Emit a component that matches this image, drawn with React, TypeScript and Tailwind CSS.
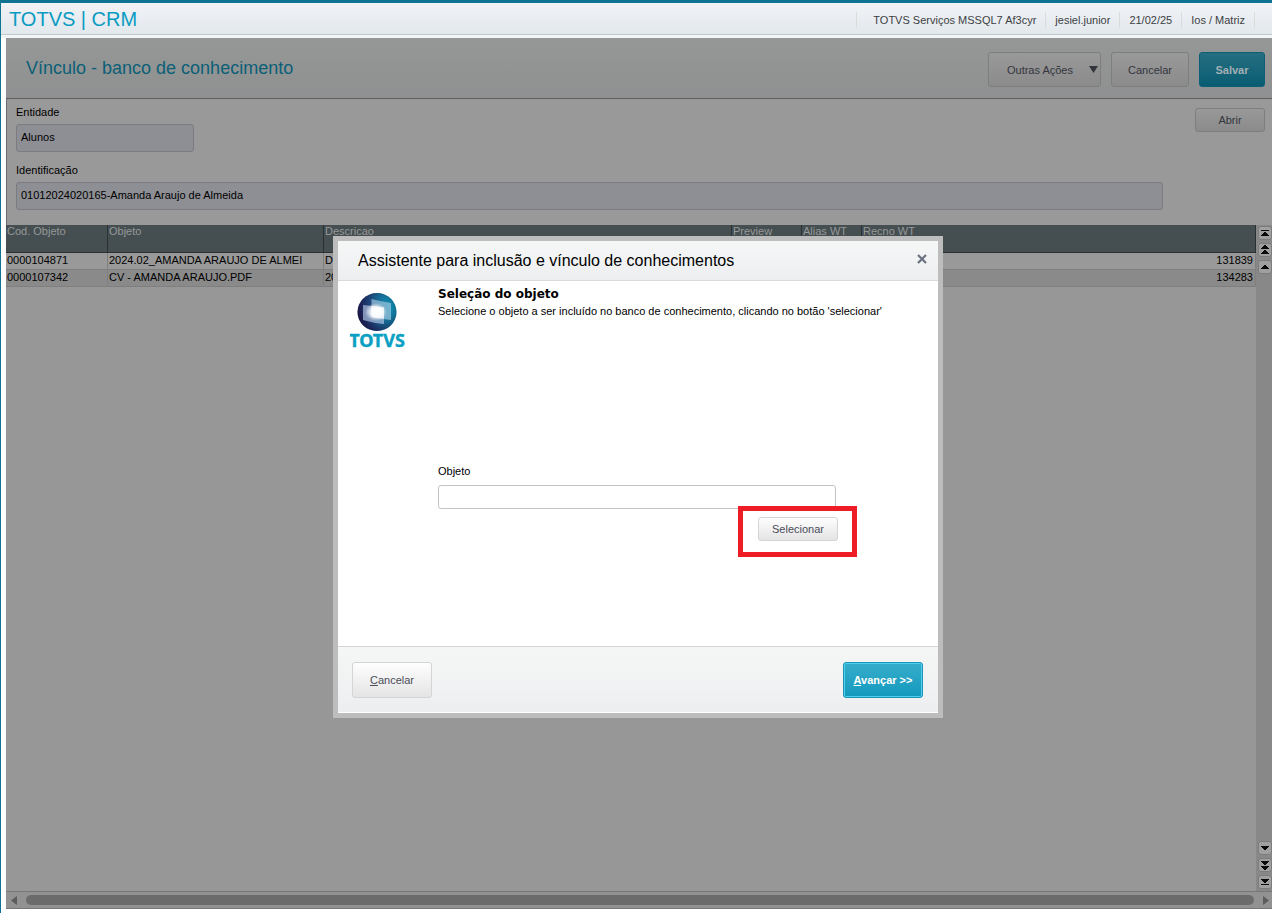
import React from "react";

const rows = [
  { code: "0000104871", object: "2024.02_AMANDA ARAUJO DE ALMEI", description: "DO", recno: "131839" },
  { code: "0000107342", object: "CV - AMANDA ARAUJO.PDF", description: "20", recno: "134283" },
];

const session = ["jesiel.junior", "21/02/25", "Ios / Matriz"];

function TotvsLogo() {
  return (
    <svg width="56" height="58" viewBox="0 0 56 58" role="img" aria-label="TOTVS">
      <defs>
        <linearGradient id="ball" x1="0" y1="0.6" x2="1" y2="0.35">
          <stop offset="0" stopColor="#1e1648" />
          <stop offset="0.35" stopColor="#1d3f73" />
          <stop offset="0.7" stopColor="#1678a0" />
          <stop offset="1" stopColor="#0aa0c2" />
        </linearGradient>
        <radialGradient id="shade" cx="0.5" cy="0.45" r="0.56">
          <stop offset="0.6" stopColor="#15153f" stopOpacity="0" />
          <stop offset="1" stopColor="#15153f" stopOpacity="0.5" />
        </radialGradient>
        <radialGradient id="glow" cx="0.5" cy="0.5" r="0.5">
          <stop offset="0" stopColor="#ffffff" />
          <stop offset="0.5" stopColor="#ffffff" stopOpacity="0.8" />
          <stop offset="1" stopColor="#ffffff" stopOpacity="0" />
        </radialGradient>
      </defs>
      <ellipse cx="27" cy="20" rx="19.500" ry="19" fill="url(#ball)" />
      <ellipse cx="27" cy="20" rx="19.500" ry="19" fill="url(#shade)" />
      <path d="M21.500 7 Q31 9.500 41 11 V28 Q31 27 21.500 25 Z" fill="#a9cde4" fillOpacity="0.65" />
      <path d="M13 13 Q23 13.500 34 15.500 V32 Q23 31 13 28 Z" fill="#b9cde8" fillOpacity="0.65" />
      <path d="M21.500 14 Q28 14 34 15.500 V26.500 Q28 26.500 21.500 25 Z" fill="#ffffff" fillOpacity="0.75" />
      <ellipse cx="26" cy="20" rx="11" ry="9" fill="url(#glow)" />
      <text
        x="27"
        y="55"
        textAnchor="middle"
        fontFamily="'Noto Sans', 'Open Sans', sans-serif"
        fontWeight="700"
        fontSize="18"
        fill="#0a9fc3"
        stroke="#0a9fc3"
        strokeWidth="0.4"
      >
        TOTVS
      </text>
    </svg>
  );
}

function ScrollButton({ label, children }: { label: string; children: React.ReactNode }) {
  return (
    <button
      type="button"
      aria-label={label}
      className="flex h-[14px] w-[14px] items-center justify-center rounded-[3px] border border-[#7c7c7c] bg-[#a0a0a0]"
    >
      <svg width="10" height="12" viewBox="0 0 10 12" fill="#0a0a0a" shapeRendering="crispEdges">
        {children}
      </svg>
    </button>
  );
}

const dimButton =
  "flex items-center justify-center rounded-[3px] border border-[#7e7e7e] bg-linear-to-b from-[#999999] to-[#8b8b8b] text-[#33353d]";
const lightButton =
  "flex items-center justify-center rounded-[3px] border border-[#d4d4d4] bg-linear-to-b from-[#fefefe] to-[#e4e4e4] text-[#4a4d5a]";
const field = "h-7 rounded-[3px] border border-[#7b7c80] bg-[#8e8f94] px-1 pb-[3px] text-black outline-none";
const headCell = "border-r border-b border-[#2b3032] pl-px text-left align-top font-normal";
const bodyCell = "truncate border-r border-b border-[#7f7f7f] pl-px align-top";

function Dialog() {
  return (
    <div
      role="dialog"
      aria-labelledby="dialog-title"
      className="flex h-[482px] w-[610px] flex-col border-[5px] border-[#bdbdbd] bg-white"
    >
      <header className="flex h-10 shrink-0 items-center justify-between border-b border-[#d9dadb] bg-linear-to-b from-[#f5f7f7] to-[#eceef0] pr-[10px] pl-5">
        <h2 id="dialog-title" className="text-base text-black">
          Assistente para inclusão e vínculo de conhecimentos
        </h2>
        <button type="button" aria-label="Fechar" className="mb-1 flex h-3 w-3 items-center justify-center">
          <svg width="10" height="10" viewBox="0 0 10 10" stroke="#6b7080" strokeWidth="2.200">
            <path d="M1 1 L9 9 M9 1 L1 9" />
          </svg>
        </button>
      </header>

      <div className="flex flex-1">
        <div className="w-[100px] shrink-0 pt-[11px] pl-3">
          <TotvsLogo />
        </div>
        <div className="flex flex-1 flex-col pt-[5px] text-black">
          <h3 className="font-['DejaVu_Sans'] text-xs font-bold">Seleção do objeto</h3>
          <p className="mt-px">
            Selecione o objeto a ser incluído no banco de conhecimento, clicando no botão 'selecionar'
          </p>
          <label htmlFor="objeto" className="mt-[144px]">
            Objeto
          </label>
          <input
            id="objeto"
            type="text"
            className="mt-[6px] h-6 w-[398px] rounded-[3px] border border-[#c3c3c3] bg-white px-1 outline-none"
          />
          <div className="relative mt-2 ml-80 w-20">
            <button type="button" className={`${lightButton} h-6 w-20`}>
              Selecionar
            </button>
            <div className="pointer-events-none absolute -top-[11px] -right-[19px] -bottom-4 -left-5 border-[5px] border-[#ee1c25]" />
          </div>
        </div>
      </div>

      <footer className="mb-px flex h-[66px] shrink-0 items-start justify-between border-t border-[#d3d5d5] bg-linear-to-b from-[#f5f7f6] to-[#eceef0] pt-[15px] pr-[15px] pl-[14px]">
        <button type="button" className={`${lightButton} h-9 w-20`}>
          <span>
            <u className="underline-offset-1">C</u>ancelar
          </span>
        </button>
        <button
          type="button"
          className="flex h-9 w-20 items-center justify-center rounded-[3px] border border-[#1b93b4] bg-linear-to-b from-[#35adcb] to-[#0f99bd] font-bold text-white inset-ring inset-ring-[#4fd0ef]"
        >
          <span>
            <u className="underline-offset-1">A</u>vançar &gt;&gt;
          </span>
        </button>
      </footer>
    </div>
  );
}

export default function App() {
  return (
    <div className="flex min-h-screen flex-col border-t-[3px] border-l border-[#0e7291] bg-white font-['Liberation_Sans',Arial,sans-serif] text-[11px] leading-4">
      <header className="flex h-8 shrink-0 items-center justify-between border-b border-[#bfcccd] bg-linear-to-b from-[#f1f2f6] to-[#e2e8ec] pr-[17px] pl-2">
        <h1 className="text-xl text-[#0a9bc2]">TOTVS | CRM</h1>
        <div className="flex items-center pt-[2px] text-[#3d3f44]">
          <span className="border-l border-[#d9dcd9] pr-[9px] pl-4">TOTVS Serviços MSSQL7 Af3cyr</span>
          {session.map((item) => (
            <span key={item} className="border-l border-[#d9dcd9] px-[9px]">
              {item}
            </span>
          ))}
          <span className="h-4 border-l border-[#d9dcd9]" />
        </div>
      </header>
      <div className="h-[3px] shrink-0 bg-[#f4f5f6]" />

      <main className="relative mb-1 ml-[5px] flex flex-1 flex-col bg-[#999999]">
        <div className="flex h-[61px] shrink-0 items-center justify-between border-b border-[#5e5e5e] bg-linear-to-b from-[#959896] to-[#8f9091] pr-[7px] pl-5">
          <h2 className="text-lg text-[#0b5f77]">Vínculo - banco de conhecimento</h2>
          <div className="flex items-center gap-[10px] pt-[3px]">
            <button type="button" className={`${dimButton} h-[35px] w-[113px] justify-end gap-4 pr-[2px]`}>
              Outras Ações
              <svg width="9" height="7" viewBox="0 0 9 7" fill="#33353d">
                <path d="M0 0 H9 L4.500 7 Z" />
              </svg>
            </button>
            <button type="button" className={`${dimButton} h-[35px] w-[78px]`}>
              Cancelar
            </button>
            <button
              type="button"
              className="flex h-[35px] w-[66px] items-center justify-center rounded-[3px] border border-[#0b6077] bg-linear-to-b from-[#246e80] to-[#075d73] font-bold text-[#a3b0b5]"
            >
              Salvar
            </button>
          </div>
        </div>

        <div className="flex h-[126px] shrink-0 items-start justify-between border-l border-[#6c6c6c] pr-[7px] pl-[9px]">
          <div className="flex flex-1 flex-col pt-[5px] text-black">
            <label htmlFor="entidade">Entidade</label>
            <input id="entidade" readOnly defaultValue="Alunos" className={`${field} mt-1 w-[178px]`} />
            <label htmlFor="identificacao" className="mt-[10px]">
              Identificação
            </label>
            <input
              id="identificacao"
              readOnly
              defaultValue="01012024020165-Amanda Araujo de Almeida"
              className={`${field} mt-1 mr-8`}
            />
          </div>
          <button type="button" className={`${dimButton} mt-[9px] h-6 w-[70px]`}>
            Abrir
          </button>
        </div>

        <div className="flex flex-1">
          <div className="flex-1 bg-[#979797]">
            <table className="w-full table-fixed border-separate border-spacing-0 text-black">
              <colgroup>
                <col className="w-[102px]" />
                <col className="w-[216px]" />
                <col className="w-[408px]" />
                <col className="w-[70px]" />
                <col className="w-[60px]" />
                <col />
              </colgroup>
              <thead className="bg-[#454e50] text-[#96999a]">
                <tr className="h-7 leading-[12px]">
                  <th className={headCell}>Cod. Objeto</th>
                  <th className={headCell}>Objeto</th>
                  <th className={headCell}>Descricao</th>
                  <th className={headCell}>Preview</th>
                  <th className={headCell}>Alias WT</th>
                  <th className={headCell}>Recno WT</th>
                </tr>
              </thead>
              <tbody>
                {rows.map((row) => (
                  <tr key={row.code} className="h-[17px] bg-[#999999] leading-[14px] even:bg-[#8a8a8a]">
                    <td className={bodyCell}>{row.code}</td>
                    <td className={bodyCell}>{row.object}</td>
                    <td className={bodyCell}>{row.description}</td>
                    <td className={bodyCell} />
                    <td className={bodyCell} />
                    <td className={`${bodyCell} pr-[2px] text-right`}>{row.recno}</td>
                  </tr>
                ))}
              </tbody>
            </table>
          </div>
          <div className="flex w-4 shrink-0 flex-col justify-between bg-[#888888] pt-px pb-[2px] pl-[2px]">
            <div className="flex flex-col gap-[3px]">
              <ScrollButton label="Primeiro">
                <path d="M1 3h8v1H1zM4 5h2v1H4zM3 6h4v1H3zM2 7h6v1H2zM1 8h8v1H1z" />
              </ScrollButton>
              <ScrollButton label="Página anterior">
                <path d="M4 1h2v1H4zM3 2h4v1H3zM2 3h6v1H2zM1 4h8v1H1zM4 6h2v1H4zM3 7h4v1H3zM2 8h6v1H2zM1 9h8v1H1z" />
              </ScrollButton>
              <ScrollButton label="Linha anterior">
                <path d="M4 4h2v1H4zM3 5h4v1H3zM2 6h6v1H2zM1 7h8v1H1z" />
              </ScrollButton>
            </div>
            <div className="flex flex-col gap-[3px]">
              <ScrollButton label="Próxima linha">
                <path d="M1 4h8v1H1zM2 5h6v1H2zM3 6h4v1H3zM4 7h2v1H4z" />
              </ScrollButton>
              <ScrollButton label="Próxima página">
                <path d="M1 2h8v1H1zM2 3h6v1H2zM3 4h4v1H3zM4 5h2v1H4zM1 7h8v1H1zM2 8h6v1H2zM3 9h4v1H3zM4 10h2v1H4z" />
              </ScrollButton>
              <ScrollButton label="Último">
                <path d="M1 3h8v1H1zM2 4h6v1H2zM3 5h4v1H3zM4 6h2v1H4zM1 8h8v1H1z" />
              </ScrollButton>
            </div>
          </div>
        </div>

        <div className="flex h-[18px] shrink-0 items-center gap-[9px] border-y border-[#767676] bg-[#929292] pr-[3px] pl-[5px]">
          <button type="button" aria-label="Rolar para a esquerda">
            <svg width="6" height="9" viewBox="0 0 6 9" fill="#5c5c5c">
              <path d="M6 0 V9 L0 4.500 Z" />
            </svg>
          </button>
          <div className="h-[10px] flex-1 rounded-full bg-[#6b6b6b]" />
          <button type="button" aria-label="Rolar para a direita">
            <svg width="6" height="9" viewBox="0 0 6 9" fill="#5c5c5c">
              <path d="M0 0 V9 L6 4.500 Z" />
            </svg>
          </button>
        </div>

        <div className="absolute inset-0 flex items-start justify-center pt-[198px] pr-[2px]">
          <Dialog />
        </div>
      </main>
    </div>
  );
}
